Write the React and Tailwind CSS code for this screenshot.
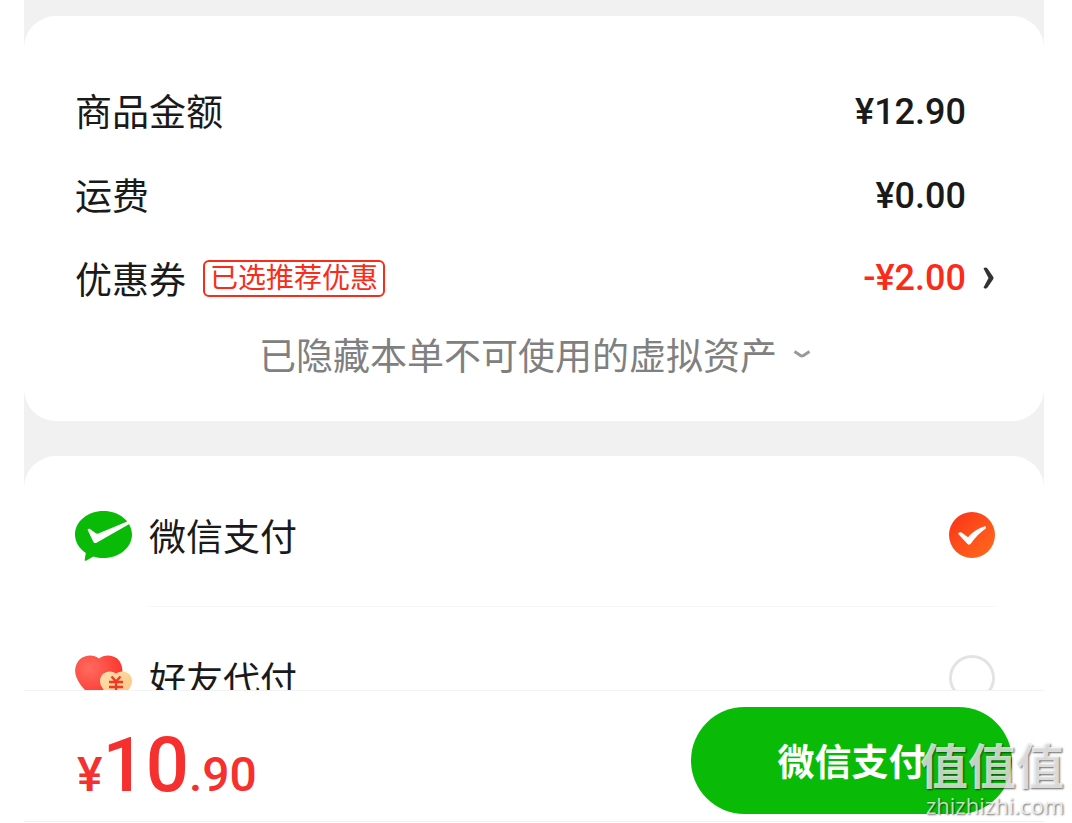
import { useState } from 'react';

const labelFont = 'font-["Noto_Sans_CJK_SC",sans-serif]';
const priceFont = 'font-[Roboto,sans-serif]';

function WechatPayIcon() {
  return (
    <svg viewBox="0 -2 57 52" className="h-[52px] w-[57px]" aria-hidden="true">
      <path
        fill="#09bb07"
        d="M28.5 0C12.8 0 0 10.500 0 23.500C0 31 4.200 37.600 10.800 41.900L9.700 48.800C9.600 49.700 10.300 50.100 11 49.700L18.400 45.600C21.600 46.600 25 47.100 28.500 47.100C44.200 47.100 57 36.600 57 23.500C57 10.500 44.200 0 28.500 0Z"
      />
      <path
        fill="#fff"
        d="M12.600 18.800C12.900 17.600 14 17.300 15 18L20.800 22.200C21.600 22.700 22.500 22.800 23.400 22.400L53.400 9.900L54.800 12.800L22 31.600C20.600 32.500 19.100 32.200 18.300 30.800Z"
      />
    </svg>
  );
}

function FriendPayIcon() {
  return (
    <svg viewBox="0 -3 57 52" className="h-[52px] w-[57px]" aria-hidden="true">
      <defs>
        <radialGradient id="heartRed" cx="0.3" cy="0.3" r="0.8">
          <stop offset="0" stopColor="#ff6b60" />
          <stop offset="1" stopColor="#fb2f27" />
        </radialGradient>
        <linearGradient id="heartGold" x1="0" y1="0" x2="1" y2="1">
          <stop offset="0" stopColor="#ffe0ae" />
          <stop offset="1" stopColor="#fcc27e" />
        </linearGradient>
      </defs>
      <path
        fill="url(#heartRed)"
        d="M24 3.500C19.500 -0.300 12 -0.800 6.500 3C0.500 7.500 -1.500 15.500 1.500 22.500C5 31 14 40.500 21 43.500C23 44.400 25 44.400 27 43.500C34 40.500 42.500 31 46 22.500C49 15.500 47 7.500 41.500 3C36 -0.800 28.500 -0.300 24 3.500Z"
      />
      <path
        fill="url(#heartGold)"
        d="M41 18.500C37 15.600 31.500 15.800 28 19C24.500 22.300 24.200 27.500 26.500 31.500C29.500 37 34.500 41.500 39 43.800C40.400 44.500 41.700 44.500 43 43.800C47.500 41.500 52.500 37 55.500 31.500C57.800 27.500 57.500 22.300 54 19C50.500 15.800 45 15.600 41 18.500Z"
      />
      <path
        fill="none"
        stroke="#ef3a26"
        strokeWidth="2.400"
        d="M36.500 21.500L41 26.500L45.500 21.500M34 27H48M34 32H48M41 26.500V37"
      />
    </svg>
  );
}

const methods = [
  { id: 'wechat', name: '微信支付', Icon: WechatPayIcon },
  { id: 'friend', name: '好友代付', Icon: FriendPayIcon }
];

function PriceRow({ label, value }) {
  return (
    <div className="flex h-[84px] items-center justify-between pr-[29px]">
      <dt className={`${labelFont} pb-1 text-[37px] leading-none`}>{label}</dt>
      <dd className={`${priceFont} text-[36px] leading-none font-medium`}>{value}</dd>
    </div>
  );
}

function MethodRow({ method, checked, onSelect }) {
  const { id, name, Icon } = method;

  return (
    <div className="flex h-[142px] items-center">
      <Icon />
      <label
        htmlFor={id}
        className={`${labelFont} ml-[17px] flex-1 text-[37px] leading-none`}
      >
        {name}
      </label>
      <span className="relative h-[46px] w-[46px]">
        <input
          id={id}
          type="radio"
          name="method"
          checked={checked}
          onChange={() => onSelect(id)}
          className="block h-full w-full appearance-none rounded-full border-[3px] border-[#e3e3e3] bg-white checked:border-0 checked:bg-linear-to-br checked:from-[#fa2c19] checked:to-[#ff6a1c]"
        />
        {checked && (
          <svg
            viewBox="0 0 46 46"
            className="pointer-events-none absolute inset-0"
            aria-hidden="true"
          >
            <path
              fill="#fff"
              d="M9 21.800C9.800 20.200 11.800 19.800 13.300 20.900L19 25.200C23.500 19.800 29 16 36.400 13.900L37 16.200C30.700 20.600 26.200 25.400 21.900 31.600C20.800 33 19.400 33 18.300 31.700Z"
            />
          </svg>
        )}
      </span>
    </div>
  );
}

function App() {
  const [method, setMethod] = useState('wechat');

  return (
    <div className="relative flex h-screen flex-col overflow-hidden bg-white pr-7 pl-6 text-[#1a1a1a]">
      <main className="min-h-0 flex-1 overflow-hidden bg-[#f1f1f1] pt-4">
        <section className="rounded-[32px] bg-white pt-[54px] pr-[49px] pb-[31px] pl-[51px]">
          <dl>
            <PriceRow label="商品金额" value="¥12.90" />
            <PriceRow label="运费" value="¥0.00" />
            <div className="flex h-20 items-center">
              <dt className={`${labelFont} flex items-center gap-[17px] text-[37px] leading-none`}>
                优惠券
                <span className="flex h-[37px] items-center rounded-md border-2 border-[#fa2c19] px-[5px] pb-1 text-[28px] leading-none text-[#fa2c19]">
                  已选推荐优惠
                </span>
              </dt>
              <dd className="ml-auto">
                <button
                  type="button"
                  className={`${priceFont} flex items-center text-[36px] leading-none font-medium text-[#fa2c19]`}
                >
                  -¥2.00
                  <svg viewBox="0 0 11 22" className="mr-px ml-[17px] h-[22px] w-[11px]" aria-hidden="true">
                    <path
                      fill="#333"
                      d="M0.500 1.500C1.500 0 3.500 0 4.500 1.500L10 9.500C10.700 10.500 10.700 11.500 10 12.500L4.500 20.500C3.500 22 1.500 22 0.500 20.500L5.500 11Z"
                    />
                  </svg>
                </button>
              </dd>
            </div>
          </dl>
          <button
            type="button"
            className={`${labelFont} mx-auto flex h-[72px] items-center gap-4 text-[37px] leading-none text-[#808080]`}
          >
            已隐藏本单不可使用的虚拟资产
            <svg viewBox="0 0 18 10" className="h-[10px] w-[18px]" aria-hidden="true">
              <path
                fill="none"
                stroke="#999"
                strokeWidth="3"
                strokeLinejoin="round"
                d="M1.500 2.500L7.500 6.500Q9 7.500 10.500 6.500L16.500 2.500"
              />
            </svg>
          </button>
        </section>

        <section className="mt-[35px] rounded-t-[32px] bg-white pt-2 pr-[49px] pl-[51px]">
          <MethodRow method={methods[0]} checked={method === 'wechat'} onSelect={setMethod} />
          <hr className="ml-[74px] border-[#f5f5f5]" />
          <MethodRow method={methods[1]} checked={method === 'friend'} onSelect={setMethod} />
        </section>
      </main>

      <footer className="border-t border-[#f3f3f3] bg-white">
        <div className="flex items-center justify-between border-b border-[#f0f0f0] pt-4 pr-8 pb-[7px] pl-[53px]">
          <p className={`${priceFont} flex items-baseline pt-2 leading-none font-medium text-[#f5302e]`}>
            <span className="text-[48px]">¥</span>
            <span className="text-[76px]">10</span>
            <span className="text-[48px]">.90</span>
          </p>
          <button
            type="button"
            className={`${labelFont} h-[107px] w-[321px] rounded-full bg-[#09bb07] text-[37px] leading-none font-bold text-white`}
          >
            微信支付
          </button>
        </div>
        <div className="h-px" />
      </footer>

      <div className="pointer-events-none absolute right-2 bottom-1 text-right text-white/75 [text-shadow:1px_1px_2px_rgba(0,0,0,0.6)]">
        <p className={`${labelFont} text-[48px] leading-[56px] font-bold`}>值值值</p>
        <p className="font-['Open_Sans',sans-serif] text-[22px] leading-7">zhizhizhi.com</p>
      </div>
    </div>
  );
}

export default App;
